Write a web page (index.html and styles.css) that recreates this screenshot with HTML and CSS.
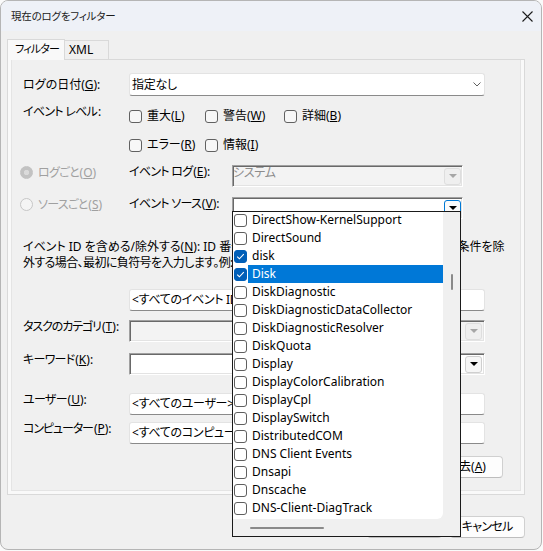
FILE: index.html
```html
<!DOCTYPE html>
<html lang="ja">
<head>
<meta charset="utf-8">
<title>現在のログをフィルター</title>
<link rel="stylesheet" href="styles.css">
</head>
<body>
<div class="window">
  <div class="titlebar">
    <span class="title">現在のログをフィルター</span>
    <svg class="close" width="11" height="11" viewBox="0 0 11 11"><path d="M0.5 0.5L10.5 10.5M10.5 0.5L0.5 10.5" fill="none" stroke="#1c1c1c" stroke-width="1.1"/></svg>
  </div>
  <div class="client">
    <div class="tabs">
      <div class="tab active">フィルター</div>
      <div class="tab xml">XML</div>
    </div>
    <div class="panel">
      <div class="page">
        <div class="row r-date">
          <div class="lbl">ログの日付(<u>G</u>):</div>
          <div class="field modern w-full">
            <span class="val">指定なし</span>
            <svg class="chev" width="8" height="5" viewBox="0 0 8 5"><path d="M0.5 0.5L4 4L7.5 0.5" fill="none" stroke="#606060" stroke-width="1"/></svg>
          </div>
        </div>
        <div class="row r-level">
          <div class="lbl lbl-level"><span class="k">イベント レベル</span>:</div>
          <div class="checks">
            <div class="chk"><span class="box"></span>重大(<u>L</u>)</div>
            <div class="chk"><span class="box"></span>警告(<u>W</u>)</div>
            <div class="chk"><span class="box"></span>詳細(<u>B</u>)</div>
            <div class="chk"><span class="box"></span>エラー(<u>R</u>)</div>
            <div class="chk"><span class="box"></span>情報(<u>I</u>)</div>
          </div>
        </div>
        <div class="row r-log">
          <div class="opt"><span class="radio on"></span><span class="k">ログごと</span>(<u>O</u>)</div>
          <div class="sublbl"><span class="k">イベント ログ</span>(<u>E</u>):</div>
          <div class="field classic dis w-mid">
            <span class="val top gray">システム</span>
            <span class="abtn abtn-dis"><svg width="8" height="4" viewBox="0 0 8 4"><path d="M0 0H8L4 4Z" fill="#a6a6a6"/></svg></span>
          </div>
        </div>
        <div class="row r-src">
          <div class="opt"><span class="radio"></span><span class="k">ソースごと</span>(<u>S</u>)</div>
          <div class="sublbl"><span class="k">イベント ソース</span>(<u>V</u>):</div>
          <div class="field classic w-mid">
            <span class="val top"></span>
            <span class="abtn abtn-focus"><svg width="8" height="4" viewBox="0 0 8 4"><path d="M0 0H8L4 4Z" fill="#000"/></svg></span>
          </div>
        </div>
        <p class="desc">イベント ID を含める/除外する(<u>N</u>): ID 番号や ID 範囲をコンマで区切って入力します。条件を除<br><span class="l2">外する場合、最初に負符号を入力します。例: 1,3,5-99,-76</span></p>
        <div class="row r-id">
          <div class="field modern w-full"><span class="val">&lt;すべてのイベント ID&gt;</span></div>
        </div>
        <div class="row r-task">
          <div class="lbl"><span class="k2">タスクのカテゴリ</span>(<u>T</u>):</div>
          <div class="field classic dis w-full">
            <span class="val top"></span>
            <span class="abtn abtn-dis"><svg width="8" height="4" viewBox="0 0 8 4"><path d="M0 0H8L4 4Z" fill="#a6a6a6"/></svg></span>
          </div>
        </div>
        <div class="row r-key">
          <div class="lbl"><span class="k">キーワード</span>(<u>K</u>):</div>
          <div class="field classic w-full">
            <span class="val top"></span>
            <span class="abtn"><svg width="8" height="4" viewBox="0 0 8 4"><path d="M0 0H8L4 4Z" fill="#000"/></svg></span>
          </div>
        </div>
        <div class="row r-user">
          <div class="lbl"><span class="k">ユーザー</span>(<u>U</u>):</div>
          <div class="field modern w-full"><span class="val">&lt;すべてのユーザー&gt;</span></div>
        </div>
        <div class="row r-comp">
          <div class="lbl"><span class="k2">コンピューター</span>(<u>P</u>):</div>
          <div class="field modern w-full"><span class="val">&lt;すべてのコンピューター&gt;</span></div>
        </div>
        <div class="row r-clear">
          <div class="btn btn-clear">消去(<u>A</u>)</div>
        </div>
      </div>
    </div>
    <div class="actions">
      <div class="btn">OK</div>
      <div class="btn"><span class="k">キャンセル</span></div>
    </div>
  </div>

  <div class="dropdown">
    <div class="dd-main">
      <div class="dd-list">
        <div class="dd-items">
          <div class="item"><span class="cb"></span><span class="txt">DirectShow-KernelSupport</span></div>
          <div class="item"><span class="cb"></span><span class="txt">DirectSound</span></div>
          <div class="item"><span class="cb on"><svg width="11" height="11" viewBox="0 0 11 11"><path d="M2.2 5.6L4.4 7.8L8.8 3.2" fill="none" stroke="#fff" stroke-width="1.1"/></svg></span><span class="txt">disk</span></div>
          <div class="item sel"><span class="cb on"><svg width="11" height="11" viewBox="0 0 11 11"><path d="M2.2 5.6L4.4 7.8L8.8 3.2" fill="none" stroke="#fff" stroke-width="1.1"/></svg></span><span class="txt">Disk</span></div>
          <div class="item"><span class="cb"></span><span class="txt">DiskDiagnostic</span></div>
          <div class="item"><span class="cb"></span><span class="txt">DiskDiagnosticDataCollector</span></div>
          <div class="item"><span class="cb"></span><span class="txt">DiskDiagnosticResolver</span></div>
          <div class="item"><span class="cb"></span><span class="txt">DiskQuota</span></div>
          <div class="item"><span class="cb"></span><span class="txt">Display</span></div>
          <div class="item"><span class="cb"></span><span class="txt">DisplayColorCalibration</span></div>
          <div class="item"><span class="cb"></span><span class="txt">DisplayCpl</span></div>
          <div class="item"><span class="cb"></span><span class="txt">DisplaySwitch</span></div>
          <div class="item"><span class="cb"></span><span class="txt">DistributedCOM</span></div>
          <div class="item"><span class="cb"></span><span class="txt">DNS Client Events</span></div>
          <div class="item"><span class="cb"></span><span class="txt">Dnsapi</span></div>
          <div class="item"><span class="cb"></span><span class="txt">Dnscache</span></div>
          <div class="item"><span class="cb"></span><span class="txt">DNS-Client-DiagTrack</span></div>
        </div>
      </div>
      <div class="vscroll"><span class="vthumb"></span></div>
    </div>
    <div class="hscroll"><span class="hthumb"></span></div>
  </div>
</div>
</body>
</html>
```

FILE: styles.css
```css
* { box-sizing: border-box; }
html, body { margin: 0; padding: 0; }
body {
  background: #fafafa;
  font-family: "Noto Sans", "Noto Sans CJK JP", sans-serif;
  font-size: 12px;
  color: #000;
  font-feature-settings: "palt" 1;
}
u { text-decoration: underline; text-underline-offset: 1px; }
p { margin: 0; }
.k { letter-spacing: -0.7px; margin-right: 0.7px; }
.k2 { letter-spacing: -1.1px; margin-right: 1.1px; }

.window {
  position: relative;
  width: 542px;
  height: 550px;
  border: 1px solid #b5b5b5;
  border-radius: 8px;
  background: #f0f0f0;
  overflow: hidden;
}
.titlebar {
  height: 30px;
  background: #eef1f7;
  display: flex;
  align-items: center;
  justify-content: space-between;
  padding: 0 8px 0 10px;
}
.title { font-size: 10.5px; line-height: 16px; color: #1a1a1a; letter-spacing: -0.2px; }
.close { display: block; }

.client { padding: 8px 0 0 6px; }
.tabs { display: flex; align-items: flex-end; height: 21px; }
.tab {
  height: 20px;
  border: 1px solid #d9d9d9;
  border-bottom: none;
  background: #f0f0f0;
  line-height: 18px;
  padding-left: 4px;
  white-space: nowrap;
}
.tab.active {
  position: relative;
  z-index: 2;
  height: 21px;
  width: 58px;
  background: #f9f9f9;
  line-height: 17px;
  padding-left: 7px;
  font-size: 11px;
  letter-spacing: -0.8px;
}
.tab.xml { width: 44px; border-left: none; }

.panel {
  position: relative;
  z-index: 1;
  margin-top: -1px;
  width: 518px;
  height: 436px;
  border: 1px solid #d9d9d9;
  background: #f9f9f9;
  padding: 0 3px 3px 3px;
}
.page {
  height: 100%;
  background: #f0f0f0;
  border: 1px solid #e4e4e4;
  border-top: none;
  padding: 13px 17px 0 11px;
}

.row { display: flex; align-items: flex-start; }
.lbl { width: 106px; flex: none; line-height: 14px; white-space: nowrap; }
.sublbl { width: 103px; flex: none; line-height: 14px; white-space: nowrap; }

.field {
  display: flex;
  align-items: center;
  height: 22px;
  background: #fff;
  flex: none;
}
.w-full { width: 356px; }
.w-mid { width: 231px; }
.modern {
  border: 1px solid #e3e3e3;
  border-bottom-color: #8a8a8a;
  border-radius: 3px;
  padding-left: 2px;
}
.val { line-height: 14px; white-space: nowrap; letter-spacing: -0.3px; }
.chev { margin-left: auto; margin-right: 3px; }

.classic {
  border-style: solid;
  border-width: 1px;
  border-color: #a0a0a0 #ffffff #ffffff #a0a0a0;
  box-shadow: inset 1px 1px 0 #696969, inset -1px -1px 0 #e3e3e3;
}
.classic.dis { background: #f3f3f3; }
.val.top { align-self: flex-start; line-height: 12px; margin-top: 1px; }
.gray { color: #8c8c8c; }

.abtn {
  margin-left: auto;
  margin-right: 1px;
  width: 17px;
  height: 17px;
  border: 1px solid #cfcfcf;
  border-radius: 3px;
  background: #f6f6f6;
  display: flex;
  align-items: center;
  justify-content: center;
  flex: none;
}
.abtn svg { display: block; }
.abtn-dis { border-color: #dedede; background: #efefef; }
.abtn-focus { border-color: #0078d4; background: #fbfbfb; }
.w-full .abtn { margin-right: 2px; }

.r-date { height: 23px; align-items: center; }
.r-date .field { height: 23px; }

.r-level { margin-top: 8px; }
.lbl-level { line-height: 16px; }
.checks {
  display: grid;
  grid-template-columns: 76px 79px auto;
  grid-auto-rows: 24px;
  row-gap: 5px;
}
.chk { display: flex; align-items: center; white-space: nowrap; line-height: 14px; }
.box {
  width: 13px;
  height: 13px;
  border: 1px solid #616161;
  border-radius: 3px;
  background: #f7f7f7;
  margin-right: 5px;
  flex: none;
}

.r-log { margin-top: 8px; height: 22px; }
.r-src { margin-top: 10px; height: 22px; }
.opt {
  width: 109px;
  flex: none;
  margin-left: -3px;
  display: flex;
  align-items: center;
  height: 14px;
  color: #a0a0a0;
  white-space: nowrap;
}
.radio {
  width: 13px;
  height: 13px;
  border-radius: 50%;
  border: 1px solid #c6c6c6;
  background: #f4f4f4;
  margin-right: 5px;
  flex: none;
}
.radio.on {
  border-color: #c2c2c2;
  background: radial-gradient(circle, #dadada 0 2.4px, #c2c2c2 3px);
}

.desc { margin-top: 20px; line-height: 16px; white-space: nowrap; }
.desc .l2 { letter-spacing: -0.6px; }
.r-id { margin-top: 18px; padding-left: 106px; }
.r-task { margin-top: 9px; }
.r-key { margin-top: 11px; }
.r-user { margin-top: 18px; }
.r-comp { margin-top: 7px; }
.r-clear { margin-top: 12px; justify-content: flex-end; }

.btn {
  width: 75px;
  height: 22px;
  border: 1px solid #d0d0d0;
  border-bottom-color: #bdbdbd;
  border-radius: 4px;
  background: #fdfdfd;
  display: flex;
  align-items: center;
  justify-content: center;
  line-height: 14px;
  white-space: nowrap;
}
.btn-clear { width: 73px; }
.actions {
  display: flex;
  justify-content: flex-end;
  gap: 8px;
  margin-top: 21px;
  width: 518px;
}

.dropdown {
  position: absolute;
  left: 231px;
  top: 210px;
  width: 229px;
  height: 326px;
  border: 1px solid #1a1a1a;
  background: #f0f0f0;
  display: flex;
  flex-direction: column;
  z-index: 5;
}
.dd-main { display: flex; height: 307px; flex: none; }
.dd-list {
  width: 210px;
  background: #fff;
  border-bottom-right-radius: 6px;
  overflow: hidden;
}
.dd-items { margin-top: -1px; }
.item { display: flex; align-items: center; height: 18px; white-space: nowrap; }
.cb {
  width: 13px;
  height: 13px;
  border: 1px solid #5f5f5f;
  border-radius: 3px;
  margin: 0 1px;
  flex: none;
  background: #fff;
}
.cb.on {
  background: #005fb8;
  border-color: #005fb8;
  display: flex;
  align-items: center;
  justify-content: center;
}
.cb svg { display: block; }
.txt { flex: 1; height: 18px; line-height: 18px; padding-left: 4px; color: #000; }
.item.sel .txt { background: #0078d7; color: #fff; }
.vscroll { width: 17px; padding: 62px 0 0 8px; }
.vthumb { display: block; width: 2px; height: 16px; background: #8a8a8a; border-radius: 1px; }
.hscroll { height: 17px; padding: 8px 0 0 17px; flex: none; }
.hthumb { display: block; width: 74px; height: 2px; background: #8a8a8a; border-radius: 1px; }
```
